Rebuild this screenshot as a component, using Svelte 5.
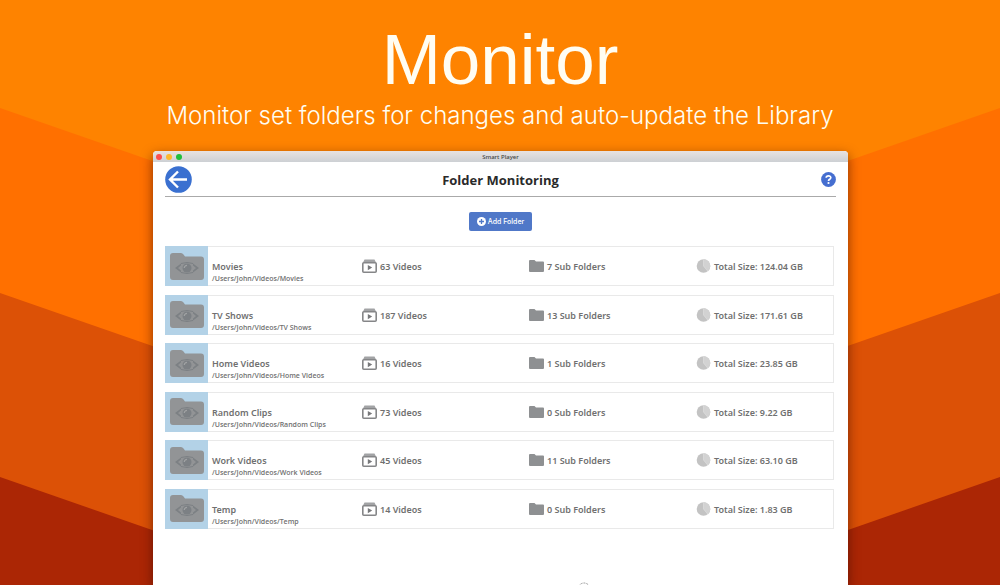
<script>
  const folders = [
    { name: 'Movies', videos: 63, subs: 7, size: '124.04 GB' },
    { name: 'TV Shows', videos: 187, subs: 13, size: '171.61 GB' },
    { name: 'Home Videos', videos: 16, subs: 1, size: '23.85 GB' },
    { name: 'Random Clips', videos: 73, subs: 0, size: '9.22 GB' },
    { name: 'Work Videos', videos: 45, subs: 11, size: '63.10 GB' },
    { name: 'Temp', videos: 14, subs: 0, size: '1.83 GB' }
  ];
</script>

<main class="page">
  <svg class="bands" viewBox="0 0 1000 585" preserveAspectRatio="none" aria-hidden="true">
    <path fill="#ff7000" d="M0 108 500 282 1000 108V585H0Z" />
    <path fill="#dc5106" d="M0 293 500 467 1000 293V585H0Z" />
    <path fill="#ab2605" d="M0 477 310 585H0ZM1000 477 690 585H1000Z" />
  </svg>

  <header class="hero">
    <h1>Monitor</h1>
    <p>Monitor set folders for changes and auto-update the Library</p>
  </header>

  <section class="window">
    <div class="titlebar">
      <div class="lights"><i class="red"></i><i class="amber"></i><i class="green"></i></div>
      <span>Smart Player</span>
    </div>

    <div class="content">
      <div class="toolbar">
        <button class="round" aria-label="Back">
          <svg width="27" height="27" viewBox="0 0 27 27">
            <circle cx="13.500" cy="13.500" r="13.300" fill="#3a70d0" />
            <path d="M22 13.500H5.500M13 5.500 5 13.500 13 21.500" fill="none" stroke="#fff" stroke-width="2.400" />
          </svg>
        </button>
        <h2>Folder Monitoring</h2>
        <button class="round" aria-label="Help">
          <svg width="15" height="15" viewBox="0 0 15 15">
            <circle cx="7.500" cy="7.500" r="7.400" fill="#456ed0" />
            <path d="M5.200 5.700C5.300 3.300 9.900 3.300 9.800 5.800 9.700 7.300 7.600 7.300 7.500 9" fill="none" stroke="#fff" stroke-width="1.700" />
            <circle cx="7.500" cy="11" r="1.100" fill="#fff" />
          </svg>
        </button>
      </div>

      <button class="add">
        <svg width="9" height="9" viewBox="0 0 9 9" aria-hidden="true">
          <circle cx="4.500" cy="4.500" r="4.500" fill="#fff" />
          <path d="M4.500 2V7M2 4.500H7" stroke="#4f78c8" stroke-width="1.300" />
        </svg>
        Add Folder
      </button>

      <ul class="list">
        {#each folders as f}
          <li>
            <div class="folder">
              <div class="thumb">
                <svg width="34" height="27" viewBox="0 0 34 27" aria-hidden="true">
                  <path fill="#929496" d="M0 3Q0 0 3 0H11Q12.500 0 13.500 1.500L15 3.500H31Q34 3.500 34 6.500V24Q34 27 31 27H3Q0 27 0 24Z" />
                  <path fill="#7c8084" d="M5 15 11 10.500V19.500ZM29 15 23 10.500V19.500Z" />
                  <path d="M11 10.500Q17 8.500 23 10.500M11 19.500Q17 21.500 23 19.500" fill="none" stroke="#7c8084" stroke-width="1" />
                  <path fill="#929496" d="M8 15 11.500 12Q10.500 15 11.500 18ZM26 15 22.500 12Q23.500 15 22.500 18Z" />
                  <circle cx="17" cy="15" r="4.500" fill="#7c8084" />
                  <path d="M14.300 15A2.700 2.700 0 0 1 17 12.300" fill="none" stroke="#a0a2a4" stroke-width="1.300" />
                </svg>
              </div>
              <div class="names">
                <strong>{f.name}</strong>
                <small>/Users/John/Videos/{f.name}</small>
              </div>
            </div>
            <div class="stat">
              <svg width="15" height="14" viewBox="0 0 15 14" aria-hidden="true">
                <path d="M2.500 .5H12.500L14 3.500H1Z" fill="#a2a3a5" />
                <rect x=".8" y="3.800" width="13.400" height="9.400" rx="1" fill="#fff" stroke="#858688" stroke-width="1.600" />
                <path d="M5.800 6 10.200 8.600 5.800 11.200Z" fill="#77787a" />
              </svg>
              <span>{f.videos} Videos</span>
            </div>
            <div class="stat">
              <svg width="15" height="14" viewBox="0 0 15 14" aria-hidden="true">
                <path fill="#8e9092" d="M0 2Q0 1 1 1H5.500L7 2.600H14Q15 2.600 15 3.600V12Q15 13 14 13H1Q0 13 0 12Z" />
              </svg>
              <span>{f.subs} Sub Folders</span>
            </div>
            <div class="stat">
              <svg width="15" height="14" viewBox="0 0 15 14" aria-hidden="true">
                <circle cx="7.500" cy="7" r="6.800" fill="#c3c3c3" />
                <path d="M7.500 7V.2A6.800 6.800 0 0 1 11.800 12.200Z" fill="#d2d2d2" />
                <path d="M7.500 .2V7L11.800 12.200" fill="none" stroke="#dedede" stroke-width=".7" />
              </svg>
              <span>Total Size: {f.size}</span>
            </div>
          </li>
        {/each}
      </ul>
    </div>

    <svg class="spinner" width="14" height="3" viewBox="0 0 14 3" aria-hidden="true">
      <circle cx="7" cy="7" r="6" fill="none" stroke="#999" stroke-width="1" stroke-dasharray="2 1" />
    </svg>
  </section>
</main>

<style>
  :global(body) { margin: 0; }
  .page {
    position: relative;
    min-height: 100vh;
    display: flex;
    flex-direction: column;
    overflow: hidden;
    background: #fe8300;
    font-family: "Noto Sans", "Open Sans", sans-serif;
  }
  .bands { position: absolute; inset: 0; width: 100%; height: 100%; }
  .hero {
    position: relative;
    box-sizing: border-box;
    padding-top: 20px;
    height: 151px;
    text-align: center;
    color: #fffdf2;
    font-family: "Liberation Sans", Arial, sans-serif;
  }
  h1 { margin: 0; font-size: 71px; line-height: 80px; font-weight: 400; }
  .hero p { margin: 0; font: 300 24px/32px "Inter", "Liberation Sans", sans-serif; }
  .window {
    position: relative;
    flex: 1;
    margin: 0 152px 0 153px;
    border-radius: 4px 4px 0 0;
    background: #fff;
    box-shadow: 0 4px 12px rgba(60, 10, 0, .6);
  }
  .titlebar {
    display: grid;
    grid-template-columns: 1fr auto 1fr;
    align-items: center;
    height: 11px;
    padding: 0 3px;
    border-radius: 4px 4px 0 0;
    background: linear-gradient(#e8e2e0, #cdd0d4);
    color: #444;
    font-size: 6px;
    line-height: 12px;
    font-weight: 500;
  }
  .lights { display: flex; gap: 4px; }
  .lights i { width: 6px; height: 6px; border-radius: 50%; }
  .red { background: #fc4f4e; }
  .amber { background: #fdb92c; }
  .green { background: #1fbf3c; }
  .content {
    display: flex;
    flex-direction: column;
    align-items: stretch;
    padding: 0 12px;
  }
  button { border: 0; padding: 0; cursor: pointer; }
  .toolbar {
    display: grid;
    grid-template-columns: 1fr auto 1fr;
    align-items: center;
    height: 34px;
    border-bottom: 1px solid #aaa;
  }
  .round { display: flex; background: none; justify-self: start; }
  .round:last-child { justify-self: end; }
  h2 { margin: 0; padding-top: 2px; font: 700 13px/18px "Open Sans", sans-serif; color: #2a2a2a; }
  .add {
    display: flex;
    align-items: center;
    justify-content: center;
    gap: 2px;
    align-self: center;
    width: 63px;
    height: 19px;
    margin: 15px 0;
    border-radius: 2px;
    background: #5078c8;
    color: #fff;
    font: 500 7px "Inter", sans-serif;
  }
  .list {
    display: grid;
    align-content: space-between;
    min-height: 283px;
    margin: 0 2px 0 0;
    padding: 0;
    list-style: none;
  }
  li {
    display: grid;
    grid-template-columns: repeat(4, 1fr);
    box-sizing: border-box;
    height: 40px;
    border: 1px solid #e9e9e9;
    border-left: 0;
    color: #707070;
  }
  .folder { display: flex; gap: 4px; }
  .thumb {
    display: flex;
    align-items: center;
    justify-content: center;
    width: 43px;
    margin: -1px 0;
    background: #b3d2e7;
  }
  .names { display: flex; flex-direction: column; padding-top: 14px; white-space: nowrap; }
  strong { font-size: 9px; line-height: 12px; font-weight: 600; }
  small { font: 600 7px/12px "Open Sans", sans-serif; }
  .stat {
    display: flex;
    align-items: center;
    gap: 3px;
    padding-left: 30px;
    font-size: 9px;
    line-height: 12px;
    font-weight: 600;
    white-space: nowrap;
  }
  .stat span { padding-top: 2px; }
  .spinner { position: absolute; bottom: 0; left: 61%; }
</style>
